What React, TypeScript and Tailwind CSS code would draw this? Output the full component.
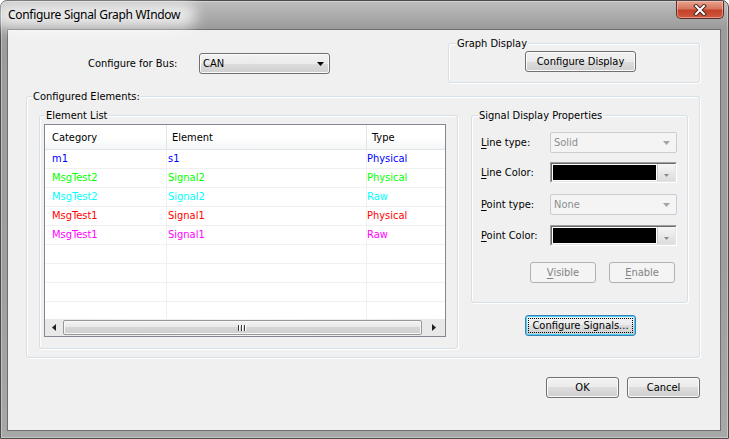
import React from "react";

const FONT = "font-['DejaVu_Sans_Condensed','DejaVu_Sans',Tahoma,sans-serif]";
const BTN =
  "flex items-center justify-center h-[21px] pt-[2px] border border-[#707070] rounded-[3px] bg-[linear-gradient(180deg,#f2f2f2_0%,#ebebeb_50%,#dddddd_50%,#cfcfcf_100%)] shadow-[inset_0_0_0_1px_#fbfbfb] text-[11px] text-black";
const BTN_DIS =
  "flex items-center justify-center h-[21px] pt-[2px] border border-[#adb2b5] rounded-[3px] bg-[#f4f4f4] text-[11px] text-[#838383]";
const GROUP = "relative border border-[#d5dfe5] rounded-[3px] shadow-[inset_1px_1px_0_#ffffff,1px_1px_0_#ffffff]";
const GLABEL = "absolute top-[-7px] bg-[#f0f0f0] px-[1px] leading-[14px] text-[11px] text-black whitespace-nowrap";

function DisabledCombo({ text }: { text: string }) {
  return (
    <div className="w-[127px] h-[21px] border border-[#c9ccd0] rounded-[2px] bg-[#f4f4f4] flex items-center pl-[3px] pr-[6px] text-[11px] text-[#8d8d8d]">
      <span className="flex-1 pt-[2px]">{text}</span>
      <svg width="7" height="4" viewBox="0 0 7 4">
        <path d="M0 0H7L3.5 4Z" fill="#a3a3a3" />
      </svg>
    </div>
  );
}

function ColorCombo() {
  return (
    <div className="w-[127px] h-[21px] border-t border-l border-[#a0a0a0] border-b border-r border-b-[#ffffff] border-r-[#ffffff] flex">
      <div className="flex-1 flex border-t border-l border-[#696969] border-b border-r border-b-[#e3e3e3] border-r-[#e3e3e3] bg-white">
        <div className="flex-1 bg-black m-[1px] mr-[1px]" />
        <div className="w-[18px] flex items-end justify-center pb-[4px] border-l border-[#c8c8c8] bg-[linear-gradient(180deg,#f6f6f6,#dcdcdc)]">
          <svg width="5" height="3" viewBox="0 0 5 3">
            <path d="M0 0H5L2.5 3Z" fill="#8a8a8a" />
          </svg>
        </div>
      </div>
    </div>
  );
}

function U({ children }: { children: React.ReactNode }) {
  return <span className="underline underline-offset-[2px]">{children}</span>;
}

const rows: [string, string, string, string][] = [
  ["m1", "s1", "Physical", "text-[#0000ff]"],
  ["MsgTest2", "Signal2", "Physical", "text-[#00ff00]"],
  ["MsgTest2", "Signal2", "Raw", "text-[#00ffff]"],
  ["MsgTest1", "Signal1", "Physical", "text-[#ff0000]"],
  ["MsgTest1", "Signal1", "Raw", "text-[#ff00ff]"],
  ["", "", "", ""],
  ["", "", "", ""],
  ["", "", "", ""],
  ["", "", "", ""],
];

function ListView() {
  return (
    <div className="w-[402px] h-[213px] border border-[#828790] bg-white flex flex-col">
      <div className="h-[25px] flex border-b border-[#e3e4e6] bg-[linear-gradient(180deg,#ffffff_0%,#ffffff_50%,#f5f6f7_100%)] text-[11px] text-black">
        <div className="w-[122px] border-r border-[#e3e4e6] flex items-center pl-[7px] pt-[3px]">Category</div>
        <div className="w-[200px] border-r border-[#e3e4e6] flex items-center pl-[5px] pt-[3px]">Element</div>
        <div className="flex-1 flex items-center pl-[5px] pt-[3px]">Type</div>
      </div>
      <div className="flex-1 overflow-hidden">
        {rows.map((r, i) => (
          <div key={i} className={"h-[19px] flex border-b border-[#f0f0f0] text-[11px] " + r[3]}>
            <div className="w-[122px] border-r border-[#f0f0f0] flex items-center pl-[7px]">{r[0]}</div>
            <div className="w-[200px] border-r border-[#f0f0f0] flex items-center pl-[1px]">{r[1]}</div>
            <div className="flex-1 flex items-center pl-[0px]">{r[2]}</div>
          </div>
        ))}
      </div>
      <div className="h-[17px] flex items-stretch bg-[linear-gradient(90deg,#e8e8e8,#f3f3f3_50%,#e8e8e8)] bg-[#eeeeee]">
        <div className="w-[17px] flex items-center justify-center">
          <svg width="4" height="7" viewBox="0 0 4 7">
            <path d="M4 0V7L0 3.5Z" fill="#222" />
          </svg>
        </div>
        <div className="w-[359px] ml-[1px] my-[1px] border border-[#979797] rounded-[2px] bg-[linear-gradient(180deg,#f3f3f3_0%,#e8e8e8_50%,#d6d6d6_50%,#cfcfcf_100%)] shadow-[inset_0_0_0_1px_#f8f8f8] flex items-center justify-center">
          <svg width="9" height="6" viewBox="0 0 9 6">
            <path d="M0.5 0V6M3.5 0V6M6.5 0V6" stroke="#3a3a3a" strokeWidth="1" />
            <path d="M1.5 0V6M4.5 0V6M7.5 0V6" stroke="#ffffff" strokeWidth="1" />
          </svg>
        </div>
        <div className="flex-1 flex items-center justify-center">
          <svg width="4" height="7" viewBox="0 0 4 7">
            <path d="M0 0V7L4 3.5Z" fill="#222" />
          </svg>
        </div>
      </div>
    </div>
  );
}

export default function App() {
  return (
    <div className={"w-[729px] h-[439px] overflow-hidden " + FONT}>
      <div className="w-[729px] h-[439px] flex flex-col border border-[#4a4a4a] rounded-t-[7px] bg-[linear-gradient(180deg,#bdbdbd_0px,#9c9c9c_27px,#9e9e9e_60%,#a8a8a8_100%)] shadow-[inset_0_0_0_1px_rgba(255,255,255,0.35)]">
        {/* Title bar */}
        <div className="h-[28px] flex items-start">
          <div className="relative h-[28px] flex items-center pl-[7px]">
            <div className="absolute left-[-8px] right-[-16px] top-[2px] bottom-[1px] rounded-full bg-[#ffffff] opacity-75 blur-[7px]" />
            <span className="relative font-['Noto_Sans',sans-serif] text-[12px] text-black tracking-[-0.3px]">
              Configure Signal Graph WIndow
            </span>
          </div>
          <div className="ml-auto mr-[4px] w-[48px] h-[18px] border border-t-0 border-[#5c2f2b] rounded-b-[5px] bg-[linear-gradient(180deg,#e8a48f_0%,#d7765f_45%,#c4412a_55%,#d0593e_100%)] shadow-[inset_0_0_0_1px_rgba(255,210,200,0.5)] flex items-center justify-center">
            <svg width="14" height="12" viewBox="0 0 14 12">
              <path d="M3 2L11 10M11 2L3 10" stroke="#4a2520" strokeWidth="4" strokeLinecap="square" />
              <path d="M3 2L11 10M11 2L3 10" stroke="#ffffff" strokeWidth="2" strokeLinecap="square" />
            </svg>
          </div>
        </div>

        {/* Client area */}
        <div className="ml-[6px] w-[714px] h-[402px] border border-[#6e6e6e] bg-[#f0f0f0] flex flex-col text-[11px] text-black">
          {/* Top row */}
          <div className="h-[66px] flex items-start">
            <div className="ml-[80px] mt-[23px] flex items-center">
              <div className="w-[111px] pt-[2px]">Configure for Bus:</div>
              <div className="w-[131px] h-[21px] border border-[#707070] rounded-[3px] bg-[linear-gradient(180deg,#f2f2f2_0%,#ebebeb_50%,#dddddd_50%,#cfcfcf_100%)] shadow-[inset_0_0_0_1px_#fbfbfb] flex items-center pl-[3px] pr-[5px]">
                <span className="flex-1 pt-[2px]">CAN</span>
                <svg width="7" height="4" viewBox="0 0 7 4">
                  <path d="M0 0H7L3.5 4Z" fill="#000" />
                </svg>
              </div>
            </div>
            <div className={"ml-auto mr-[20px] mt-[13px] w-[252px] h-[40px] " + GROUP}>
              <span className={GLABEL + " left-[7px]"}>Graph Display</span>
              <div className="pl-[76px] pt-[7px]">
                <div className={BTN + " w-[111px]"}>Configure Display</div>
              </div>
            </div>
          </div>

          {/* Configured Elements */}
          <div className={"ml-[18px] w-[674px] h-[262px] " + GROUP}>
            <span className={GLABEL + " left-[5px]"}>Configured Elements:</span>
            <div className="flex items-start pl-[12px] pt-[18px]">
              <div className={"w-[419px] h-[234px] " + GROUP}>
                <span className={GLABEL + " left-[5px]"}>Element List</span>
                <div className="pl-[4px] pt-[8px]">
                  <ListView />
                </div>
              </div>
              <div className="ml-[13px] flex flex-col">
                <div className={"w-[217px] h-[188px] " + GROUP}>
                  <span className={GLABEL + " left-[6px]"}>Signal Display Properties</span>
                  <div className="flex flex-col pl-[9px] pt-[16px]">
                    <div className="flex items-center h-[21px]">
                      <div className="w-[69px] pt-[2px]"><U>L</U>ine type:</div>
                      <DisabledCombo text="Solid" />
                    </div>
                    <div className="flex items-center h-[21px] mt-[9px]">
                      <div className="w-[69px] pt-[2px]"><U>L</U>ine Color:</div>
                      <ColorCombo />
                    </div>
                    <div className="flex items-center h-[21px] mt-[11px]">
                      <div className="w-[69px] pt-[2px]"><U>P</U>oint type:</div>
                      <DisabledCombo text="None" />
                    </div>
                    <div className="flex items-center h-[21px] mt-[10px]">
                      <div className="w-[69px] pt-[2px]"><U>P</U>oint Color:</div>
                      <ColorCombo />
                    </div>
                    <div className="flex mt-[16px] pl-[49px] gap-[13px]">
                      <div className={BTN_DIS + " w-[66px]"}><span><U>V</U>isible</span></div>
                      <div className={BTN_DIS + " w-[66px]"}><span><U>E</U>nable</span></div>
                    </div>
                  </div>
                </div>
                <div className="mt-[12px] ml-[54px] w-[111px] h-[21px] flex border border-[#3c7fb1] rounded-[3px] bg-[linear-gradient(180deg,#f2f2f2_0%,#ebebeb_50%,#dddddd_50%,#cfcfcf_100%)] shadow-[inset_0_0_0_1px_#48d2fb]">
                  <div className="flex-1 m-[2px] pt-[1px] border border-dotted border-black flex items-center justify-center">
                    Configure Signals...
                  </div>
                </div>
              </div>
            </div>
          </div>

          {/* Bottom buttons */}
          <div className="flex justify-end gap-[8px] mr-[20px] mt-[19px]">
            <div className={BTN + " w-[73px]"}>OK</div>
            <div className={BTN + " w-[73px]"}>Cancel</div>
          </div>
        </div>
      </div>
    </div>
  );
}
